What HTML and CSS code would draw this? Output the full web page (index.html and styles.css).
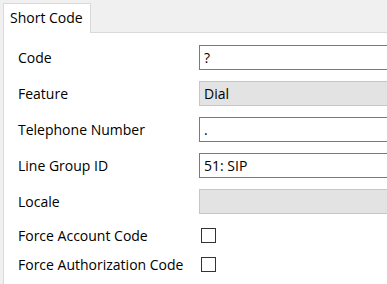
FILE: index.html
```html
<!DOCTYPE html>
<html lang="en">
<head>
<meta charset="UTF-8">
<title>Short Code</title>
<link rel="stylesheet" href="styles.css">
</head>
<body>

<div class="tabs">
    <div class="tab active">Short Code</div>
    <div class="tab-fill"></div>
</div>

<div class="panel">
    <div class="row">
        <label>Code</label>
        <div class="field">?</div>
    </div>
    <div class="row">
        <label>Feature</label>
        <div class="field disabled">Dial</div>
    </div>
    <div class="row">
        <label>Telephone Number</label>
        <div class="field">.</div>
    </div>
    <div class="row">
        <label>Line Group ID</label>
        <div class="field">51: SIP</div>
    </div>
    <div class="row">
        <label>Locale</label>
        <div class="field disabled"></div>
    </div>
    <div class="row check-row first-check">
        <label>Force Account Code</label>
        <span class="checkbox"></span>
    </div>
    <div class="row check-row">
        <label>Force Authorization Code</label>
        <span class="checkbox"></span>
    </div>
</div>

</body>
</html>
```

FILE: styles.css
```css
body {
    font-family: "Open Sans", "Noto Sans", sans-serif;
    font-size: 14px;
    color: #000;
    background-color: #f0f0f0;
    margin: 0;
    width: 387px;
    height: 284px;
    overflow: hidden;
}

.tabs {
    display: flex;
    height: 33px;
    padding-top: 3px;
    box-sizing: border-box;
    padding-left: 3px;
}

.tab {
    padding: 4px 7px 0 6px;
    border: 1px solid #d9d9d9;
    border-bottom: none;
    background-color: #fff;
    white-space: nowrap;
}

.tab-fill {
    flex: 1;
    border-bottom: 1px solid #d9d9d9;
}

.panel {
    background-color: #fff;
    margin-left: 3px;
    border-left: 1px solid #d9d9d9;
    padding: 6px 0 0 14px;
    height: 245px;
    overflow: hidden;
}

.row {
    display: flex;
    align-items: center;
    height: 36px;
}

.row label {
    width: 181px;
    flex: none;
}

.field {
    flex: 1;
    height: 25px;
    line-height: 23px;
    box-sizing: border-box;
    border: 1px solid #7a7a7a;
    border-right: none;
    padding-left: 4px;
    background-color: #fff;
}

.field.disabled {
    background-color: #e3e3e3;
    border-color: #c6c6c6;
}

.check-row {
    height: 29px;
}

.first-check {
    margin-top: 2px;
}

.checkbox {
    width: 13px;
    height: 13px;
    border: 1px solid #333;
    margin-left: 2px;
    background-color: #fff;
}
```
